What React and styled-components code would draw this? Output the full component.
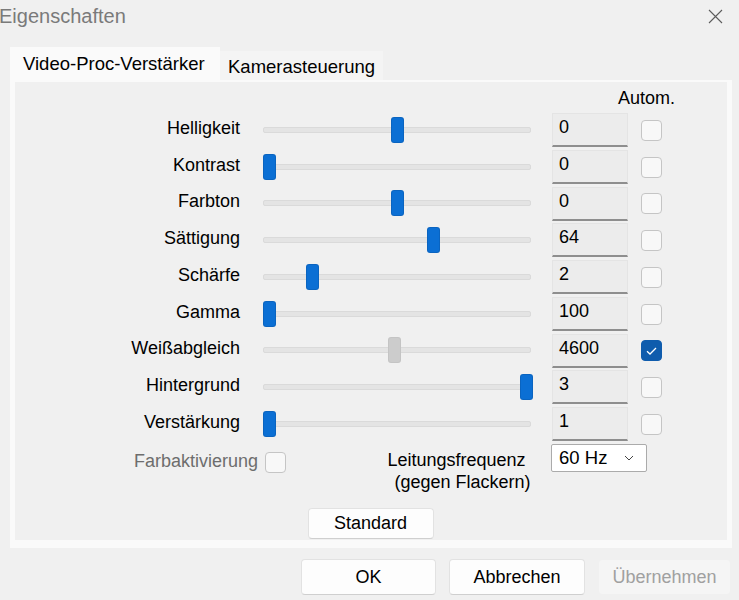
import React from "react";
import styled, { createGlobalStyle } from "styled-components";

const Global = createGlobalStyle`
  html, body { margin: 0; padding: 0; background: #f0f0f0; }
  body { font-family: "Segoe UI", "Liberation Sans", Arial, sans-serif; color: #000; }
  * { box-sizing: border-box; }
`;

const Window = styled.div`
  width: 739px;
  height: 600px;
  background: #f0f0f0;
  display: flex;
  flex-direction: column;
  overflow: hidden;
`;

const TitleBar = styled.div`
  height: 47px;
  display: flex;
  align-items: flex-start;
  justify-content: space-between;
  padding: 3px 16px 0 0;
`;

const Title = styled.div`
  font-size: 20px;
  line-height: 26px;
  color: #7a7a7a;
  margin-left: -1px;
`;

const Close = styled.svg`
  width: 15px;
  height: 15px;
  margin-top: 6px;
`;

const TabStrip = styled.div`
  display: flex;
  align-items: flex-end;
  margin-left: 10px;
  height: 33px;
`;

const Tab = styled.div`
  height: ${(p) => (p.$active ? "33px" : "29px")};
  padding: 0 ${(p) => (p.$active ? "13px" : "8px")};
  padding-top: ${(p) => (p.$active ? "0" : "3px")};
  background: ${(p) => (p.$active ? "#fafafa" : "#f4f4f4")};
  font-size: 18.5px;
  display: flex;
  align-items: center;
  width: ${(p) => p.$w}px;
  white-space: nowrap;
`;

const Panel = styled.div`
  margin: 0 7px 0 10px;
  height: 468px;
  background: #f0f0f0;
  border: 5px solid #fafafa;
  border-top-width: 2px;
  border-bottom-width: 8px;
  display: flex;
  flex-direction: column;
  padding-left: 1px;
`;

const Grid = styled.div`
  display: grid;
  grid-template-columns: 247px 289px 89px 21px;
  grid-template-rows: 31px;
  grid-auto-rows: 36.75px;
  align-items: center;
`;

const Autom = styled.div`
  grid-column: 3 / 5;
  justify-self: end;
  margin-right: -13px;
  font-size: 18px;
  padding-top: 2px;
`;

const Label = styled.div`
  justify-self: end;
  padding-right: 23px;
  font-size: 18px;
  margin-top: -6px;
`;

const Track = styled.div`
  position: relative;
  width: 268px;
  height: 6px;
  background: #e4e4e4;
  border: 1px solid #dadada;
  border-radius: 2px;
  margin-top: -3px;
`;

const Thumb = styled.div`
  position: absolute;
  top: -10px;
  width: 11px;
  height: 24px;
  border-radius: 2px;
  background: ${(p) => (p.$disabled ? "#cccccc" : "#0b6fd4")};
  box-shadow: 0 0 0 1px ${(p) => (p.$disabled ? "#c4c4c4" : "#0a64c0")};
`;

const Field = styled.div`
  height: 34px;
  width: 76px;
  background: #ececec;
  border: 1px solid #e4e4e4;
  border-bottom: 2px solid #8e8e8e;
  font-size: 18px;
  padding: 3px 0 0 6px;
  align-self: start;
`;

const Box = styled.div`
  width: 21px;
  height: 21px;
  border-radius: 4px;
  border: 1px solid ${(p) => (p.$checked ? "#0f5cad" : "#c5c5c5")};
  background: ${(p) => (p.$checked ? "#0f5cad" : "#f8f8f8")};
  display: flex;
  align-items: center;
  justify-content: center;
  flex-shrink: 0;
  margin-top: -2px;
`;

const BottomRow = styled.div`
  display: flex;
  align-items: flex-start;
  padding-left: 118px;
  height: 64px;
`;

const FarbLabel = styled.div`
  font-size: 18px;
  color: #6d6d6d;
  margin-top: 7px;
  margin-right: 7px;
`;

const FarbBox = styled(Box)`
  margin-top: 8px;
`;

const FreqText = styled.div`
  margin-left: 96px;
  width: 149px;
  text-align: center;
  font-size: 18px;
  line-height: 22px;
  margin-top: 5px;
  white-space: nowrap;
`;

const Line2 = styled.span`
  display: inline-block;
  padding-left: 12px;
`;

const Select = styled.div`
  margin-left: 20px;
  width: 96px;
  height: 28px;
  background: #fff;
  border: 1px solid #ababab;
  border-radius: 2px;
  display: flex;
  align-items: center;
  justify-content: space-between;
  padding: 0 12px 0 7px;
  font-size: 18.5px;
`;

const Center = styled.div`
  display: flex;
  justify-content: center;
  padding-right: 2px;
`;

const Button = styled.div`
  width: ${(p) => p.$w || 135}px;
  height: ${(p) => p.$h || 36}px;
  background: ${(p) => (p.$disabled ? "#f5f5f5" : "#fdfdfd")};
  border: 1px solid ${(p) => (p.$disabled ? "#f0f0f0" : "#e2e2e2")};
  border-bottom-color: ${(p) => (p.$disabled ? "#f0f0f0" : "#cfcfcf")};
  border-radius: 4px;
  display: flex;
  align-items: center;
  justify-content: center;
  font-size: 18px;
  color: ${(p) => (p.$disabled ? "#a0a0a0" : "#000")};
`;

const Footer = styled.div`
  display: flex;
  justify-content: flex-end;
  gap: 13px;
  padding: 11px 8px 0 0;
`;

const Check = () => (
  <svg width="13" height="10" viewBox="0 0 13 10">
    <path d="M2 5.2 L5 8 L11 2" fill="none" stroke="#fff" strokeWidth="1.3" />
  </svg>
);

const rows = [
  { label: "Helligkeit", pos: 128, value: "0" },
  { label: "Kontrast", pos: 0, value: "0" },
  { label: "Farbton", pos: 128, value: "0" },
  { label: "Sättigung", pos: 164, value: "64" },
  { label: "Schärfe", pos: 43, value: "2" },
  { label: "Gamma", pos: 0, value: "100" },
  { label: "Weißabgleich", pos: 125, value: "4600", auto: true },
  { label: "Hintergrund", pos: 257, value: "3" },
  { label: "Verstärkung", pos: 0, value: "1" },
];

export default function App() {
  return (
    <Window>
      <Global />
      <TitleBar>
        <Title>Eigenschaften</Title>
        <Close viewBox="0 0 15 15">
          <path d="M1 1 L14 14 M14 1 L1 14" stroke="#5c5c5c" strokeWidth="1.1" />
        </Close>
      </TitleBar>
      <TabStrip>
        <Tab $active $w={210}>Video-Proc-Verstärker</Tab>
        <Tab $w={163}>Kamerasteuerung</Tab>
      </TabStrip>
      <Panel>
        <Grid>
          <Autom>Autom.</Autom>
          {rows.map((r) => (
            <React.Fragment key={r.label}>
              <Label>{r.label}</Label>
              <Track>
                <Thumb $disabled={r.auto} style={{ left: r.pos }} />
              </Track>
              <Field>{r.value}</Field>
              <Box $checked={r.auto}>{r.auto && <Check />}</Box>
            </React.Fragment>
          ))}
        </Grid>
        <BottomRow>
          <FarbLabel>Farbaktivierung</FarbLabel>
          <FarbBox />
          <FreqText>
            Leitungsfrequenz
            <br />
            <Line2>(gegen Flackern)</Line2>
          </FreqText>
          <Select>
            <span>60 Hz</span>
            <svg width="10" height="6" viewBox="0 0 10 6">
              <path d="M1 1 L5 5 L9 1" fill="none" stroke="#444" strokeWidth="1" />
            </svg>
          </Select>
        </BottomRow>
        <Center>
          <Button $w={126} $h={31}>Standard</Button>
        </Center>
      </Panel>
      <Footer>
        <Button>OK</Button>
        <Button $w={136}>Abbrechen</Button>
        <Button $w={133} $disabled>Übernehmen</Button>
      </Footer>
    </Window>
  );
}
